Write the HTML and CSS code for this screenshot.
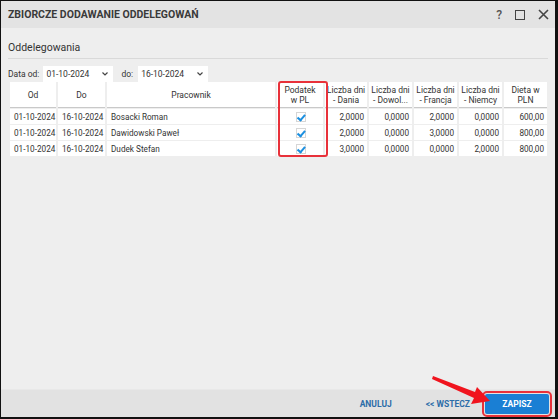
FILE: index.html
```html
<!DOCTYPE html>
<html lang="pl">
<head>
  <meta charset="UTF-8" />
  <title>Zbiorcze dodawanie oddelegowań</title>
  <link rel="stylesheet" href="styles.css">
</head>
<body>
  <div class="dialog">
    <div class="titlebar">
      <span class="title">ZBIORCZE DODAWANIE ODDELEGOWAŃ</span>
      <div class="win-buttons">
        <span class="help">?</span>
        <span class="maximize"></span>
        <svg class="close" width="11" height="11" viewBox="0 0 11 11"><path d="M1 1 L10 10 M10 1 L1 10" stroke="#444" stroke-width="1.6"/></svg>
      </div>
    </div>

    <div class="content">
      <div class="section-title">Oddelegowania</div>

      <div class="filters">
        <span class="label">Data od:</span>
        <div class="select">
          <span>01-10-2024</span>
          <svg class="chev" width="6" height="4" viewBox="0 0 6 4"><path d="M0.5 0.5 L3 3 L5.5 0.5" fill="none" stroke="#444" stroke-width="1.2"/></svg>
        </div>
        <span class="label to">do:</span>
        <div class="select">
          <span>16-10-2024</span>
          <svg class="chev" width="6" height="4" viewBox="0 0 6 4"><path d="M0.5 0.5 L3 3 L5.5 0.5" fill="none" stroke="#444" stroke-width="1.2"/></svg>
        </div>
      </div>

      <div class="grid-wrap">
        <div class="grid">
          <div class="head">Od</div>
          <div class="head">Do</div>
          <div class="head">Pracownik</div>
          <div class="head">Podatek<br>w PL</div>
          <div class="head">Liczba dni<br>- Dania</div>
          <div class="head">Liczba dni<br>- Dowol...</div>
          <div class="head">Liczba dni<br>- Francja</div>
          <div class="head">Liczba dni<br>- Niemcy</div>
          <div class="head">Dieta w<br>PLN</div>

          <div class="cell">01-10-2024</div>
          <div class="cell">16-10-2024</div>
          <div class="cell">Bosacki Roman</div>
          <div class="cell check"><span class="box"></span></div>
          <div class="cell num">2,0000</div>
          <div class="cell num">0,0000</div>
          <div class="cell num">2,0000</div>
          <div class="cell num">0,0000</div>
          <div class="cell num">600,00</div>

          <div class="cell">01-10-2024</div>
          <div class="cell">16-10-2024</div>
          <div class="cell">Dawidowski Paweł</div>
          <div class="cell check"><span class="box"></span></div>
          <div class="cell num">2,0000</div>
          <div class="cell num">0,0000</div>
          <div class="cell num">3,0000</div>
          <div class="cell num">0,0000</div>
          <div class="cell num">800,00</div>

          <div class="cell">01-10-2024</div>
          <div class="cell">16-10-2024</div>
          <div class="cell">Dudek Stefan</div>
          <div class="cell check"><span class="box"></span></div>
          <div class="cell num">3,0000</div>
          <div class="cell num">0,0000</div>
          <div class="cell num">0,0000</div>
          <div class="cell num">2,0000</div>
          <div class="cell num">800,00</div>
        </div>
        <div class="highlight"></div>
      </div>
    </div>

    <div class="footer">
      <button class="link-btn cancel">ANULUJ</button>
      <button class="link-btn back">&lt;&lt; WSTECZ</button>
      <button class="primary">ZAPISZ</button>
    </div>

    <svg class="arrow" width="70" height="40" viewBox="0 0 70 40">
      <polygon points="2,4 44,20 46,15 59,29 40,32 43,26 1,7" fill="#f0141e"/>
    </svg>
  </div>
</body>
</html>
```

FILE: styles.css
```css
* {
  box-sizing: border-box;
}

body {
  margin: 0;
  padding: 0;
  background: #000;
  font-family: Roboto, "Liberation Sans", Arial, sans-serif;
  color: #333;
}

.dialog {
  position: relative;
  width: 558px;
  height: 419px;
  background: #eeeeee;
  border-style: solid;
  border-color: #111;
  border-width: 1px 3px 2px 1px;
  display: flex;
  flex-direction: column;
}

/* title bar */
.titlebar {
  height: 27px;
  background: #e3e3e3;
  display: flex;
  align-items: center;
  justify-content: space-between;
  padding: 0 6px 0 7px;
}

.title {
  font-size: 10.5px;
  font-weight: 700;
  color: #3a3a3a;
}

.win-buttons {
  display: flex;
  align-items: center;
  gap: 13px;
}

.help {
  font-size: 12px;
  font-weight: 500;
  color: #555;
}

.maximize {
  width: 10px;
  height: 10px;
  border: 1.5px solid #444;
}

/* content */
.content {
  flex: 1;
  padding: 12px 7px 0 7px;
}

.section-title {
  font-size: 10.5px;
  line-height: 16px;
  padding-bottom: 2px;
  border-bottom: 1px solid #d9d9d9;
}

.filters {
  display: flex;
  align-items: center;
  margin-top: 7px;
  height: 16px;
}

.label {
  font-size: 8.5px;
  margin-right: 4px;
}

.label.to {
  margin-left: 8px;
  margin-right: 5px;
}

.select {
  width: 70px;
  height: 16px;
  background: #fff;
  display: flex;
  align-items: center;
  justify-content: space-between;
  padding: 0 5px 0 3px;
  font-size: 8.5px;
}

/* grid */
.grid-wrap {
  position: relative;
  margin-left: 2px;
  width: 538px;
}

.grid {
  display: grid;
  grid-template-columns: 46px 47px 168px 46px 42px 43px 43px 43px 43px;
  column-gap: 2px;
  row-gap: 1px;
}

.head {
  background: #fff;
  height: 26px;
  display: flex;
  align-items: center;
  justify-content: center;
  text-align: center;
  font-size: 8.5px;
  line-height: 10px;
  border-bottom: 1px solid #c9c9c9;
}

.cell {
  background: #fff;
  height: 15px;
  display: flex;
  align-items: center;
  padding: 0 3px 0 4px;
  font-size: 8.2px;
  white-space: nowrap;
}

.cell.num {
  justify-content: flex-end;
}

.cell.check {
  justify-content: center;
}

.box {
  position: relative;
  width: 10px;
  height: 10px;
  border: 1px solid #d6d6d6;
  background: #fff;
}

.box::after {
  content: "";
  position: absolute;
  left: 2.5px;
  top: 0.5px;
  width: 3px;
  height: 5.5px;
  border: solid #1b8fe0;
  border-width: 0 2px 2px 0;
  transform: rotate(40deg);
}

.highlight {
  position: absolute;
  left: 268px;
  top: -1px;
  width: 50px;
  height: 76px;
  border: 2px solid #e8313a;
  border-radius: 3px;
}

/* footer */
.footer {
  height: 28px;
  background: #e2e2e2;
  border-top: 1px solid #e8e8e8;
  display: flex;
  align-items: center;
  justify-content: flex-end;
  padding-right: 6px;
}

.link-btn {
  background: none;
  border: none;
  font-family: inherit;
  font-size: 8.5px;
  font-weight: 700;
  color: #2c6ca8;
  padding: 0;
}

.cancel {
  margin-right: 34px;
}

.back {
  margin-right: 15px;
}

.primary {
  width: 64px;
  height: 20px;
  background: #1a7fd4;
  color: #fff;
  border: none;
  border-radius: 2px;
  font-family: inherit;
  font-size: 8.5px;
  font-weight: 700;
  outline: 2px solid #e8313a;
  outline-offset: 1px;
}

.arrow {
  position: absolute;
  left: 430px;
  top: 371px;
}
```
